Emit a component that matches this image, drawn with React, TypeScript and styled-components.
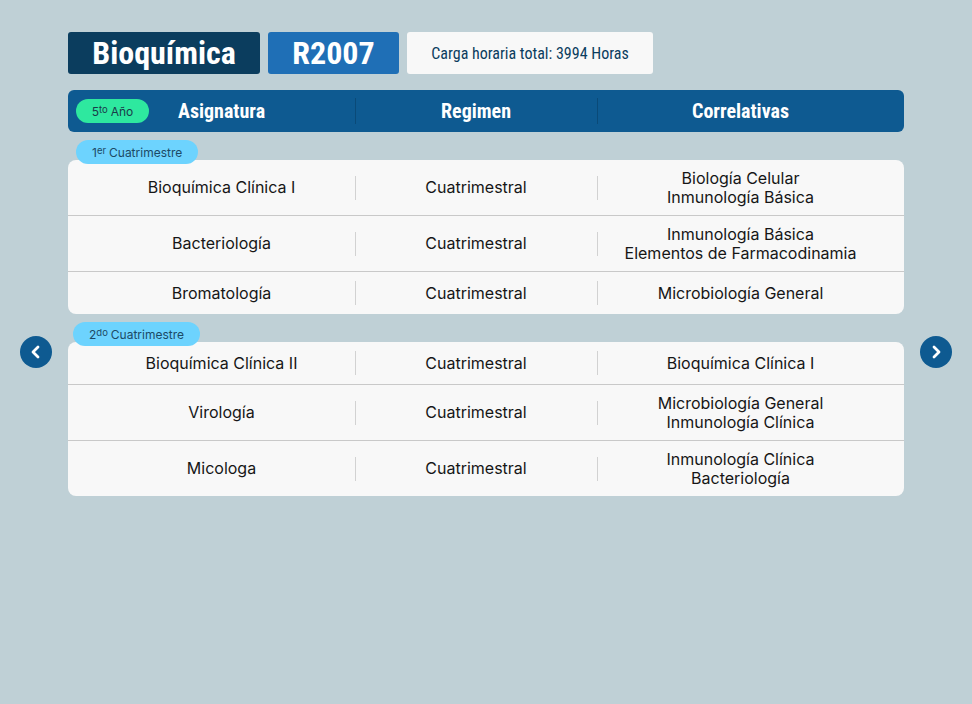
import React from "react";
import styled, { createGlobalStyle } from "styled-components";

const Global = createGlobalStyle`
  html, body { margin: 0; padding: 0; background: #bfd0d6; }
  body { font-family: Inter, "Noto Sans", sans-serif; }
`;

const COND = `"Roboto Condensed", "Liberation Sans Narrow", "DejaVu Sans Condensed", Roboto, sans-serif`;

const Page = styled.div`
  display: flex;
  min-height: 100vh;
  padding: 0 20px;
  gap: 16px;
  box-sizing: border-box;
`;

const Arrow = styled.button`
  align-self: center;
  width: 32px;
  height: 32px;
  border-radius: 50%;
  border: none;
  padding: 0;
  background: #0e5a91;
  display: flex;
  align-items: center;
  justify-content: center;
  flex: none;
  cursor: pointer;
`;

const Main = styled.div`
  width: 836px;
  padding-top: 32px;
  display: flex;
  flex-direction: column;
`;

const TitleRow = styled.div`
  display: flex;
  gap: 8px;
  height: 42px;
`;

const Chip = styled.div<{ $bg: string; $color: string; $w: number; $size: number; $weight: number }>`
  width: ${(p) => p.$w}px;
  background: ${(p) => p.$bg};
  color: ${(p) => p.$color};
  font-family: ${COND};
  font-size: ${(p) => p.$size}px;
  font-weight: ${(p) => p.$weight};
  border-radius: 3px;
  display: flex;
  align-items: center;
  justify-content: center;
`;

const HeaderBar = styled.div`
  margin-top: 16px;
  height: 42px;
  background: #0e5a91;
  border-radius: 6px;
  display: grid;
  grid-template-columns: 267px 242px 287px;
  padding: 0 20px;
  position: relative;
`;

const Sup = styled.span`
  font-size: 9.5px;
  line-height: 1;
  margin-right: 3px;
  align-self: flex-start;
  margin-top: 6px;
`;

const YearPill = styled.div`
  position: absolute;
  left: 8px;
  top: 9px;
  width: 73px;
  height: 24px;
  border-radius: 12px;
  background: #2ee89f;
  color: #1b3b4a;
  font-size: 12px;
  display: flex;
  align-items: center;
  justify-content: center;
`;

const HeadCell = styled.div<{ $div?: boolean }>`
  display: flex;
  align-items: center;
  justify-content: center;
  color: #fff;
  font-family: ${COND};
  font-weight: 700;
  font-size: 20px;
  position: relative;
  ${(p) =>
    p.$div &&
    `&::before { content: ""; position: absolute; left: 0; top: 8px; bottom: 8px; width: 1px; background: #0a4a78; }`}
`;

const Section = styled.div`
  margin-top: 8px;
  display: flex;
  flex-direction: column;
`;

const TermPill = styled.div<{ $left: number }>`
  align-self: flex-start;
  margin-left: ${(p) => p.$left}px;
  height: 24px;
  padding: 0 16px;
  border-radius: 12px;
  background: #6dd3fe;
  color: #1c4a66;
  font-size: 12px;
  display: flex;
  align-items: center;
  margin-bottom: -4px;
  position: relative;
  z-index: 1;
`;

const Card = styled.div`
  background: #f8f8f8;
  border-radius: 8px;
  overflow: hidden;
`;

const Row = styled.div<{ $h: number }>`
  display: grid;
  grid-template-columns: 267px 242px 287px;
  padding: 0 20px;
  height: ${(p) => p.$h}px;
  & + & { border-top: 1px solid #c9c9c9; }
`;

const Cell = styled.div<{ $div?: boolean }>`
  display: flex;
  flex-direction: column;
  align-items: center;
  justify-content: center;
  text-align: center;
  font-size: 16px;
  line-height: 19px;
  color: #161616;
  position: relative;
  ${(p) =>
    p.$div &&
    `&::before { content: ""; position: absolute; left: 0; top: 50%; height: 24px; margin-top: -12px; width: 1px; background: #d2d2d2; }`}
`;

type Subj = { name: string; corr: string[] };

const sem1: Subj[] = [
  { name: "Bioquímica Clínica I", corr: ["Biología Celular", "Inmunología Básica"] },
  { name: "Bacteriología", corr: ["Inmunología Básica", "Elementos de Farmacodinamia"] },
  { name: "Bromatología", corr: ["Microbiología General"] },
];
const sem2: Subj[] = [
  { name: "Bioquímica Clínica II", corr: ["Bioquímica Clínica I"] },
  { name: "Virología", corr: ["Microbiología General", "Inmunología Clínica"] },
  { name: "Micologa", corr: ["Inmunología Clínica", "Bacteriología"] },
];

const Chevron = ({ dir }: { dir: "l" | "r" }) => (
  <svg width="16" height="16" viewBox="0 0 16 16">
    <path
      d={dir === "l" ? "M10 3 L5 8 L10 13" : "M6 3 L11 8 L6 13"}
      fill="none"
      stroke="#fff"
      strokeWidth="2.8"
      strokeLinecap="round"
      strokeLinejoin="round"
    />
  </svg>
);

const Rows = ({ data }: { data: Subj[] }) => (
  <Card>
    {data.map((s) => (
      <Row key={s.name} $h={s.corr.length > 1 ? 55 : 42}>
        <Cell>{s.name}</Cell>
        <Cell $div>Cuatrimestral</Cell>
        <Cell $div>
          {s.corr.map((c) => (
            <span key={c}>{c}</span>
          ))}
        </Cell>
      </Row>
    ))}
  </Card>
);

export default function App() {
  return (
    <>
      <Global />
      <Page>
        <Arrow aria-label="anterior">
          <Chevron dir="l" />
        </Arrow>
        <Main>
          <TitleRow>
            <Chip $bg="#0b3d5e" $color="#fff" $w={192} $size={32} $weight={700}>
              Bioquímica
            </Chip>
            <Chip $bg="#1f6fb6" $color="#fff" $w={131} $size={32} $weight={700}>
              R2007
            </Chip>
            <Chip $bg="#f8f8f8" $color="#0b3d5e" $w={246} $size={16} $weight={400}>
              Carga horaria total: 3994 Horas
            </Chip>
          </TitleRow>
          <HeaderBar>
            <YearPill>
              5<Sup>to</Sup>Año
            </YearPill>
            <HeadCell>Asignatura</HeadCell>
            <HeadCell $div>Regimen</HeadCell>
            <HeadCell $div>Correlativas</HeadCell>
          </HeaderBar>
          <Section>
            <TermPill $left={8}>
              1<Sup>er</Sup>Cuatrimestre
            </TermPill>
            <Rows data={sem1} />
          </Section>
          <Section>
            <TermPill $left={5}>
              2<Sup>do</Sup>Cuatrimestre
            </TermPill>
            <Rows data={sem2} />
          </Section>
        </Main>
        <Arrow aria-label="siguiente">
          <Chevron dir="r" />
        </Arrow>
      </Page>
    </>
  );
}
